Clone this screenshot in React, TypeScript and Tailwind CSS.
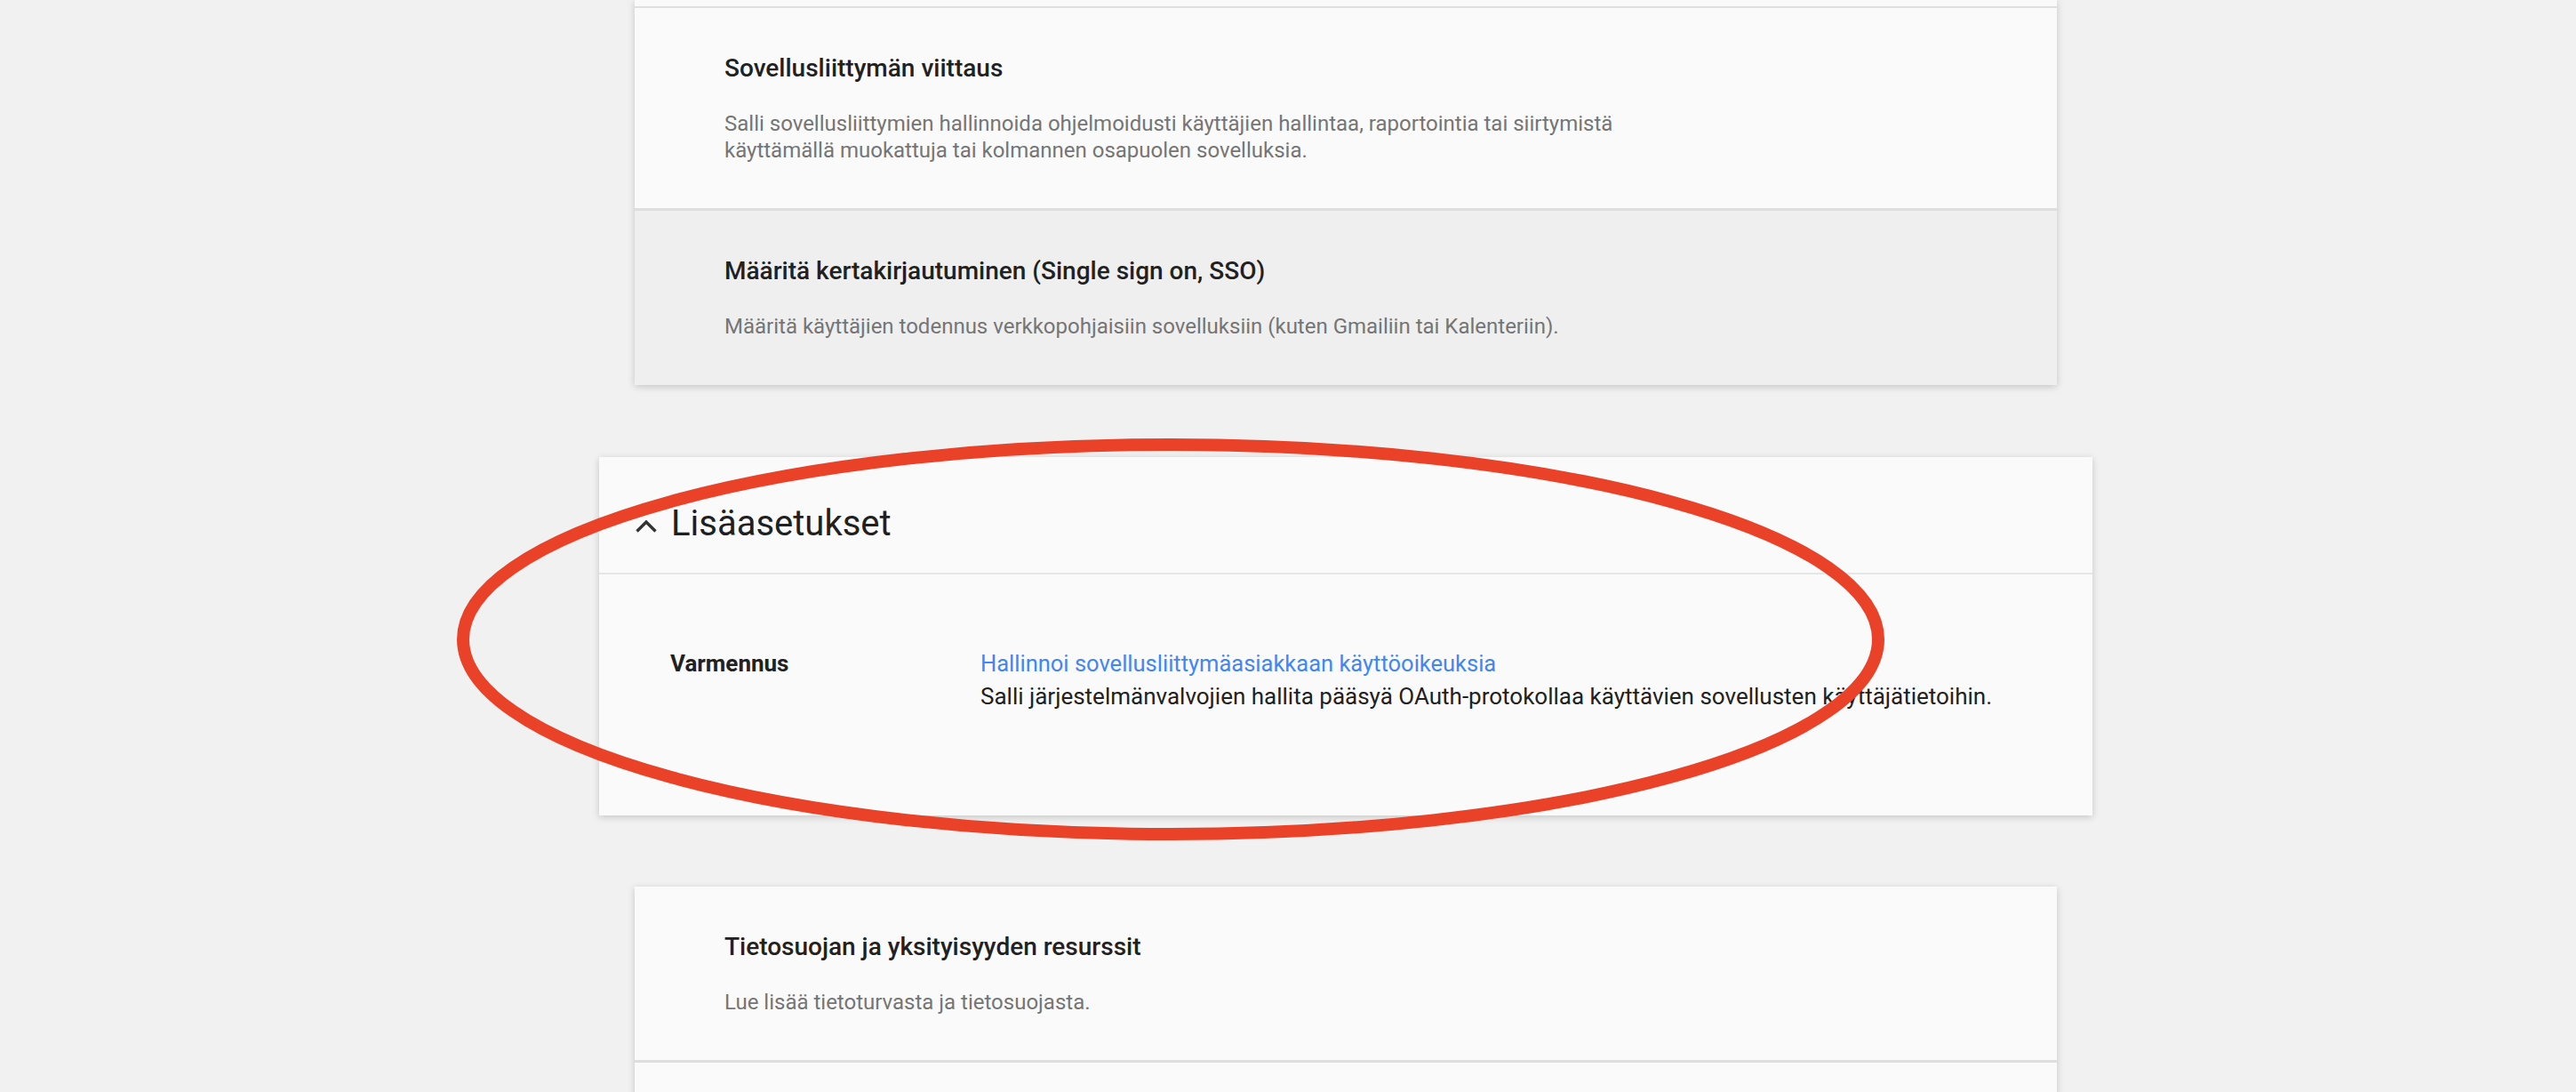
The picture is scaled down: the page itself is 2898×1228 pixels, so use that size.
import React from "react";

const font = { fontFamily: "Roboto, 'Noto Sans', Arial, sans-serif" };

function Section({
  title,
  lines,
  bg,
  pb,
}: {
  title: string;
  lines: string[];
  bg: string;
  pb: string;
}) {
  return (
    <div className={`${bg} ${pb} pl-[101px] pr-[100px] pt-[52px]`}>
      <div className="text-[28px] leading-[32px] font-medium text-[#212121]">{title}</div>
      <div className="mt-[31px] text-[24px] leading-[30px] text-[#757575]">
        {lines.map((l, i) => (
          <div key={i}>{l}</div>
        ))}
      </div>
    </div>
  );
}

export default function App() {
  return (
    <div
      className="relative w-[2898px] h-[1228px] overflow-hidden bg-[#f1f1f1]"
      style={font}
    >
      <div className="flex flex-col items-center pl-[130px]">
        {/* Card 1 */}
        <div className="w-[1600px] bg-[#fafafa] shadow-[0_2px_8px_rgba(0,0,0,0.18)]">
          <div className="h-[7px] bg-[#fafafa] border-b-2 border-[#e0e0e0] box-content" />
          <div className="border-b-[3px] border-[#dedede]">
            <Section
              bg="bg-[#fafafa]"
              pb="pb-[50px]"
              title="Sovellusliittymän viittaus"
              lines={[
                "Salli sovellusliittymien hallinnoida ohjelmoidusti käyttäjien hallintaa, raportointia tai siirtymistä",
                "käyttämällä muokattuja tai kolmannen osapuolen sovelluksia.",
              ]}
            />
          </div>
          <Section
            bg="bg-[#efefef]"
            pb="pb-[51px]"
            title="Määritä kertakirjautuminen (Single sign on, SSO)"
            lines={[
              "Määritä käyttäjien todennus verkkopohjaisiin sovelluksiin (kuten Gmailiin tai Kalenteriin).",
            ]}
          />
        </div>

        {/* Card 2 */}
        <div className="mt-[81px] w-[1680px] bg-[#fafafa] shadow-[0_2px_8px_rgba(0,0,0,0.18)]">
          <div className="h-[132px] flex items-start pt-[51px] pl-[41px] border-b-2 border-[#e6e6e6] box-border">
            <svg width="24" height="14" viewBox="0 0 24 14" className="mt-[20px] shrink-0">
              <polyline
                points="1.5,12.5 12,2 22.5,12.5"
                fill="none"
                stroke="#333333"
                strokeWidth="3.4"
              />
            </svg>
            <div className="ml-[16px] text-[40px] leading-[48px] text-[#202020]">Lisäasetukset</div>
          </div>
          <div className="flex pl-[80px] pt-[82px] pb-[115px]">
            <div className="w-[349px] text-[26px] leading-[37px] font-bold text-[#212121]">Varmennus</div>
            <div className="leading-[37px]">
              <div className="text-[25.5px] text-[#4285f4]">Hallinnoi sovellusliittymäasiakkaan käyttöoikeuksia</div>
              <div className="text-[26px] text-[#212121]">
                Salli järjestelmänvalvojien hallita pääsyä OAuth-protokollaa käyttävien sovellusten käyttäjätietoihin.
              </div>
            </div>
          </div>
        </div>

        {/* Card 3 */}
        <div className="mt-[80px] w-[1600px] bg-[#fafafa] shadow-[0_2px_8px_rgba(0,0,0,0.18)]">
          <div className="border-b-[3px] border-[#dedede]">
            <Section
              bg="bg-[#fafafa]"
              pb="pb-[50px]"
              title="Tietosuojan ja yksityisyyden resurssit"
              lines={["Lue lisää tietoturvasta ja tietosuojasta."]}
            />
          </div>
          <div className="h-[120px] bg-[#fafafa]" />
        </div>
      </div>

      {/* Annotation ellipse */}
      <svg
        className="absolute top-0 left-0 pointer-events-none"
        width="2898"
        height="1228"
        viewBox="0 0 2898 1228"
      >
        <ellipse
          cx="1317"
          cy="719"
          rx="796"
          ry="219"
          fill="none"
          stroke="#ea4129"
          strokeWidth="14"
        />
      </svg>
    </div>
  );
}
